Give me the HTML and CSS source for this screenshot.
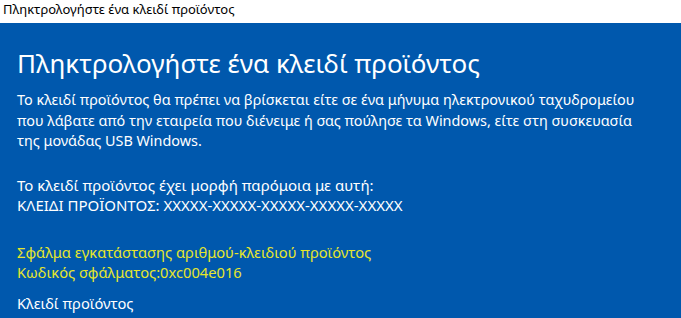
FILE: index.html
```html
<!DOCTYPE html>
<html>
<head>
    <title>Πληκτρολογήστε ένα κλειδί προϊόντος</title>
    <link rel="stylesheet" href="styles.css">
</head>
<body>
    <div class="titlebar">Πληκτρολογήστε ένα κλειδί προϊόντος</div>
    <div class="panel">
        <h1>Πληκτρολογήστε ένα κλειδί προϊόντος</h1>
        <p class="intro">Το κλειδί προϊόντος θα πρέπει να βρίσκεται είτε σε ένα μήνυμα ηλεκτρονικού ταχυδρομείου<br>
            που λάβατε από την εταιρεία που διένειμε ή σας πούλησε τα Windows, είτε στη συσκευασία<br>
            της μονάδας USB Windows.</p>
        <p class="format">Το κλειδί προϊόντος έχει μορφή παρόμοια με αυτή:<br>
            ΚΛΕΙΔΙ ΠΡΟΪΟΝΤΟΣ: XXXXX-XXXXX-XXXXX-XXXXX-XXXXX</p>
        <p class="error">Σφάλμα εγκατάστασης αριθμού-κλειδιού προϊόντος<br>
            Κωδικός σφάλματος:0xc004e016</p>
        <label class="keylabel">Κλειδί προϊόντος</label>
    </div>
</body>
</html>
```

FILE: styles.css
```css
body {
    margin: 0;
    font-family: "Noto Sans", sans-serif;
    background-color: #0058ad;
    overflow: hidden;
}
.titlebar {
    background: white;
    color: #000;
    font-size: 13px;
    height: 23px;
    line-height: 18px;
    padding-left: 3px;
}
.panel {
    padding: 21px 17px 0 17px;
    color: white;
}
h1 {
    font-weight: normal;
    font-size: 26px;
    margin: 0 0 8px 0;
    line-height: 38px;
}
p {
    margin: 0;
    font-size: 14.4px;
    line-height: 20.5px;
}
.format {
    font-size: 15px;
    margin-top: 23px;
}
.error {
    color: #e6e62c;
    font-size: 14.7px;
    margin-top: 26px;
}
.keylabel {
    display: block;
    margin-top: 10px;
    font-size: 14.7px;
}
```
